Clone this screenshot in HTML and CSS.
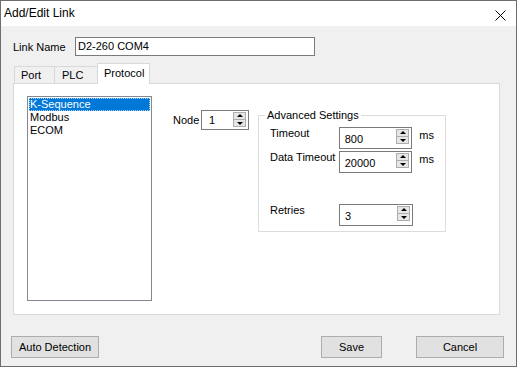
FILE: index.html
```html
<!DOCTYPE html>
<html>
  <head>
    <meta charset="utf-8" />
    <title>Add/Edit Link</title>
    <link rel="stylesheet" href="styles.css">
  </head>

  <body>
    <div class="dialog">
      <div class="titlebar">
        <span class="title">Add/Edit Link</span>
        <svg class="close" width="11" height="11" viewBox="0 0 11 11">
          <path d="M0.5 0.5 L10.5 10.5 M10.5 0.5 L0.5 10.5" stroke="#000" stroke-width="1" fill="none" />
        </svg>
      </div>

      <div class="content">
        <div class="link_row">
          <span class="link_label">Link Name</span>
          <div class="textbox">D2-260 COM4</div>
        </div>

        <div class="tabs">
          <div class="tab tab_port">Port</div>
          <div class="tab tab_plc">PLC</div>
          <div class="tab tab_protocol active">Protocol</div>
        </div>

        <div class="tab_panel">
          <div class="listbox">
            <div class="item selected">K-Sequence</div>
            <div class="item">Modbus</div>
            <div class="item">ECOM</div>
          </div>

          <div class="node">
            <span class="node_label">Node</span>
            <div class="spin spin_node">
              <span class="spin_val">1</span>
              <span class="spin_btns"><span class="spin_up"></span><span class="spin_down"></span></span>
            </div>
          </div>

          <fieldset class="group">
            <legend>Advanced Settings</legend>
            <div class="row">
              <span class="row_label">Timeout</span>
              <div class="spin spin_wide">
                <span class="spin_val">800</span>
                <span class="spin_btns"><span class="spin_up"></span><span class="spin_down"></span></span>
              </div>
              <span class="unit">ms</span>
            </div>
            <div class="row">
              <span class="row_label">Data Timeout</span>
              <div class="spin spin_wide">
                <span class="spin_val">20000</span>
                <span class="spin_btns"><span class="spin_up"></span><span class="spin_down"></span></span>
              </div>
              <span class="unit">ms</span>
            </div>
            <div class="row retries">
              <span class="row_label">Retries</span>
              <div class="spin spin_wide">
                <span class="spin_val">3</span>
                <span class="spin_btns"><span class="spin_up"></span><span class="spin_down"></span></span>
              </div>
            </div>
          </fieldset>
        </div>
      </div>

      <div class="footer">
        <button class="btn btn_auto">Auto Detection</button>
        <div class="footer_right">
          <button class="btn btn_save">Save</button>
          <button class="btn btn_cancel">Cancel</button>
        </div>
      </div>
    </div>
  </body>
</html>
```

FILE: styles.css
```css
html,
body {
  margin: 0;
  padding: 0;
}
body {
  font-family: "Liberation Sans", Arial, sans-serif;
  font-size: 11px;
  color: #000;
  background: #f0f0f0;
}
.dialog {
  width: 517px;
  height: 367px;
  box-sizing: border-box;
  border: 1px solid #6e6e6e;
  background: #f0f0f0;
  display: flex;
  flex-direction: column;
}

/* title bar */
.titlebar {
  height: 25px;
  background: #fff;
  display: flex;
  align-items: center;
  justify-content: space-between;
  padding: 0 10px 0 3px;
}
.title {
  font-size: 12px;
  margin-top: -1px;
}
.close {
  display: block;
  margin-top: 3px;
}

.content {
  padding: 11px 16px 0 12px;
}

/* link name */
.link_row {
  display: flex;
  height: 19px;
  align-items: center;
}
.link_label {
  width: 62px;
}
.textbox {
  width: 240px;
  height: 19px;
  box-sizing: border-box;
  border: 1px solid #7a7a7a;
  background: #fff;
  padding-left: 2px;
  line-height: 17px;
}

/* tabs */
.tabs {
  display: flex;
  align-items: flex-end;
  height: 20px;
  margin-top: 7px;
  padding-left: 1px;
}
.tab {
  height: 17px;
  box-sizing: border-box;
  border: 1px solid #d9d9d9;
  border-bottom: none;
  background: #f0f0f0;
  line-height: 17px;
  padding-left: 6px;
}
.tab_port {
  width: 41px;
  margin-right: -1px;
}
.tab_plc {
  width: 44px;
  margin-right: -1px;
  padding-left: 7px;
}
.tab_protocol {
  width: 53px;
}
.tab.active {
  height: 21px;
  margin-bottom: -1px;
  background: #fff;
  position: relative;
  z-index: 1;
  line-height: 18px;
}

.tab_panel {
  height: 232px;
  box-sizing: border-box;
  border: 1px solid #d9d9d9;
  background: #fff;
  display: flex;
  align-items: flex-start;
  padding: 12px 0 0 13px;
}

/* list */
.listbox {
  width: 125px;
  height: 205px;
  box-sizing: border-box;
  border: 1px solid #828790;
  padding: 1px;
}
.item {
  height: 13px;
  line-height: 13px;
  padding-left: 1px;
}
.item.selected {
  background: #0078d7;
  color: #fff;
  outline: 1px dotted #b0d0f0;
  outline-offset: -1px;
}

/* node */
.node {
  display: flex;
  align-items: center;
  margin: 14px 0 0 21px;
}
.node_label {
  width: 28px;
}

/* spin boxes */
.spin {
  display: flex;
  box-sizing: border-box;
  border: 1px solid #7a7a7a;
  background: #fff;
}
.spin_node {
  width: 48px;
  height: 20px;
}
.spin_wide {
  width: 74px;
  height: 22px;
}
.spin_val {
  flex: 1;
  padding-left: 7px;
  align-self: center;
}
.spin_wide .spin_val {
  padding-left: 5px;
  margin-top: 2px;
}
.spin_btns {
  display: flex;
  flex-direction: column;
  padding: 1px 2px 0 0;
}
.spin_up,
.spin_down {
  width: 13px;
  height: 8px;
  box-sizing: border-box;
  border: 1px solid #adadad;
  background: #e6e6e6;
  position: relative;
}
.spin_down {
  margin-top: -1px;
}
.spin_up::after,
.spin_down::after {
  content: "";
  position: absolute;
  left: 3px;
  border-left: 3px solid transparent;
  border-right: 3px solid transparent;
}
.spin_up::after {
  top: 1px;
  border-bottom: 3px solid #000;
}
.spin_down::after {
  top: 2px;
  border-top: 3px solid #000;
}

/* advanced settings group */
.group {
  width: 188px;
  height: 124px;
  box-sizing: border-box;
  margin: 12px 0 0 9px;
  border: 1px solid #dcdcdc;
  padding: 5px 11px 0 11px;
  min-inline-size: 0;
}
.group legend {
  margin-left: -5px;
  padding: 0 2px;
  line-height: 14px;
}
.row {
  display: flex;
  align-items: flex-start;
  margin-bottom: 2px;
}
.row_label {
  width: 69px;
  line-height: 14px;
  padding-top: 0;
  margin-top: 0;
  position: relative;
  top: -1px;
}
.unit {
  margin-left: 7px;
  line-height: 14px;
  padding-top: 1px;
}
.retries {
  margin-top: 31px;
}

/* footer buttons */
.footer {
  display: flex;
  justify-content: space-between;
  padding: 21px 12px 0 10px;
}
.footer_right {
  display: flex;
  gap: 34px;
}
.btn {
  height: 22px;
  box-sizing: border-box;
  border: 1px solid #adadad;
  background: #e1e1e1;
  font-family: "Liberation Sans", Arial, sans-serif;
  font-size: 11px;
  color: #000;
  padding: 0;
  margin: 0;
}
.btn_auto {
  width: 88px;
}
.btn_save {
  width: 61px;
}
.btn_cancel {
  width: 88px;
}
```
